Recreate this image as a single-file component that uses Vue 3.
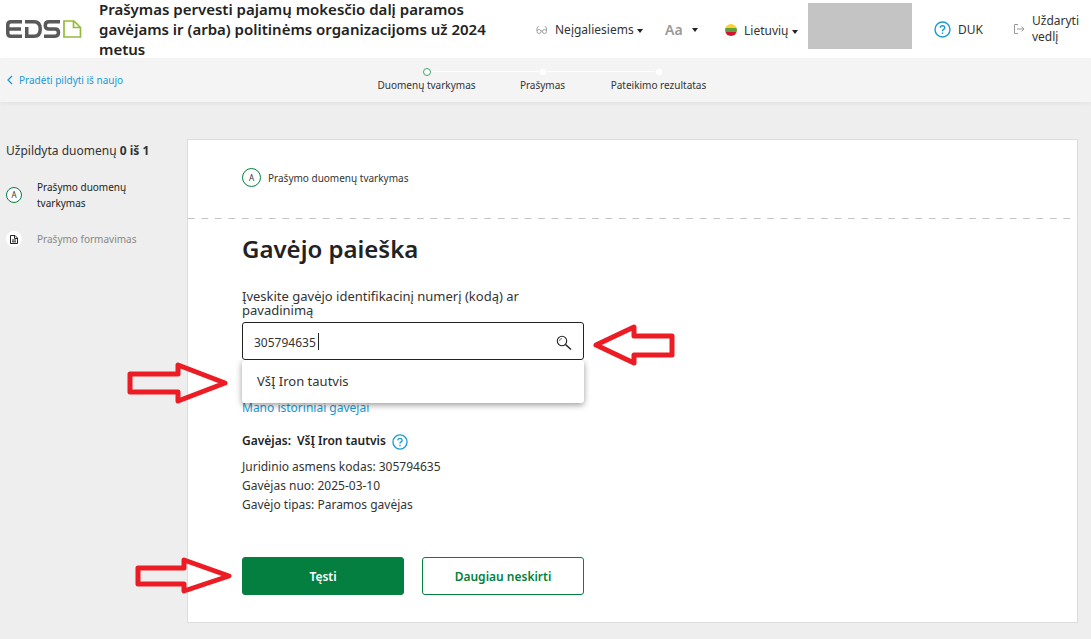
<script setup>
import { ref } from 'vue'

const query = ref('305794635')
const steps = [
  { label: 'Duomenų tvarkymas', active: true },
  { label: 'Prašymas', active: false },
  { label: 'Pateikimo rezultatas', active: false }
]
const details = [
  'Juridinio asmens kodas: 305794635',
  'Gavėjas nuo: 2025-03-10',
  'Gavėjo tipas: Paramos gavėjas'
]
</script>

<template>
  <div class="page">
    <header class="top">
      <a class="logo" href="#" aria-label="EDS">
        <svg width="76" height="20" viewBox="0 0 76 20" fill="none">
          <g stroke="#58595b" stroke-width="3.500">
            <path d="M16 2.750H5Q1.750 2.750 1.750 6V14Q1.750 17.250 5 17.250H16M2 10H15" />
            <path d="M20.750 8V17.250H28Q34.250 17.250 34.250 10T28 2.750H19" />
            <path d="M54 2.750H43Q39.250 2.750 39.250 6.400T43 10H49Q52.500 10 52.500 13.600T49 17.250H38" />
          </g>
          <path d="M58 2H68L74.500 8.500V18H58ZM67.500 2V8.500H74.500" stroke="#95bb3c" stroke-width="1.700" />
        </svg>
      </a>
      <h1>Prašymas pervesti pajamų mokesčio dalį paramos gavėjams ir (arba) politinėms organizacijoms už 2024 metus</h1>
      <nav class="tools">
        <button class="tool access" type="button">
          <svg class="glasses" width="12" height="12" viewBox="0 0 12 12" fill="none" stroke="#999" stroke-width=".9">
            <circle cx="3" cy="8.500" r="2" /><circle cx="8.500" cy="8.500" r="2" />
            <path d="M1 8V5L2.500 3M10.500 8V5L9 3M5 8H6.500" />
          </svg>
          <span>Neįgaliesiems</span><i class="caret"></i>
        </button>
        <button class="tool size" type="button"><b>Aa</b><i class="caret"></i></button>
        <button class="tool lang" type="button">
          <i class="flag"></i><span>Lietuvių</span><i class="caret"></i>
        </button>
        <div class="user"></div>
        <a class="tool duk" href="#">
          <svg class="help" width="17" height="17" viewBox="0 0 17 17" fill="none" stroke="#199ad6" stroke-width="1.400">
            <circle cx="8.500" cy="8.500" r="7.500" />
            <path d="M6.200 6.800Q6.400 4.700 8.500 4.700T10.800 6.700Q10.800 7.700 9.600 8.400T8.500 10.200M8.500 11.500V13" />
          </svg>
          <span>DUK</span>
        </a>
        <a class="tool close" href="#">
          <svg width="11" height="10" viewBox="0 0 11 10" fill="none" stroke="#999">
            <path d="M4 .5H.5V9.500H4M3 5H10M7.500 2.500L10 5L7.500 7.500" />
          </svg>
          <span>Uždaryti vedlį</span>
        </a>
      </nav>
    </header>

    <div class="progress">
      <a class="restart" href="#">
        <svg width="6" height="10" viewBox="0 0 6 10" fill="none" stroke="#199ad6" stroke-width="1.300"><path d="M5 1L1 5L5 9" /></svg>
        Pradėti pildyti iš naujo
      </a>
      <ol class="steps">
        <li v-for="s in steps" :key="s.label" :class="{ active: s.active }"><i class="dot"></i>{{ s.label }}</li>
      </ol>
    </div>

    <div class="body">
      <aside>
        <p class="filled">Užpildyta duomenų <b>0 iš 1</b></p>
        <a class="side current" href="#"><i class="badge">A</i><span>Prašymo duomenų tvarkymas</span></a>
        <a class="side" href="#">
          <i class="badge plain">
            <svg width="8" height="9" viewBox="0 0 8 9" fill="none" stroke="#222">
              <path d="M.5 .5H5L7.500 3V8.500H.5ZM4.500 .5V3.500H7.500M2 5H6M2 6.800H6" />
            </svg>
          </i>
          <span>Prašymo formavimas</span>
        </a>
      </aside>

      <main class="card">
        <div class="cardhead"><i class="badge">A</i><span>Prašymo duomenų tvarkymas</span></div>
        <section class="content">
          <h2>Gavėjo paieška</h2>
          <div class="field">
            <label for="search">Įveskite gavėjo identifikacinį numerį (kodą) ar pavadinimą</label>
            <div class="box">
              <div class="entry"><input id="search" v-model="query" type="text" autocomplete="off" /><i class="cursor"></i></div>
              <button type="button" aria-label="Ieškoti">
                <svg width="16" height="16" viewBox="0 0 16 16" fill="none" stroke="#222">
                  <circle cx="6" cy="6" r="4.700" stroke-width="1.100" />
                  <path d="M3.500 6Q3.500 3.500 6 3.500" stroke-width=".6" />
                  <path d="M9.500 9.500L15 14.500" stroke-width="1.500" />
                </svg>
              </button>
              <ul class="menu"><li>VšĮ Iron tautvis</li></ul>
              <svg class="arrow at-search" width="82" height="42" viewBox="0 0 82 42"><path d="M3 21L41 3V12H79V31H41V39Z" /></svg>
              <svg class="arrow at-option" width="102" height="42" viewBox="0 0 102 42"><path d="M3 12H51V3L98 21L51 39V30H3Z" /></svg>
            </div>
          </div>
          <a class="history" href="#">Mano istoriniai gavėjai</a>
          <p class="receiver">
            <b>Gavėjas:</b><b>VšĮ Iron tautvis</b>
            <svg class="help" width="16" height="16" viewBox="0 0 17 17" fill="none" stroke="#199ad6" stroke-width="1.400">
              <circle cx="8.500" cy="8.500" r="7.500" />
              <path d="M6.200 6.800Q6.400 4.700 8.500 4.700T10.800 6.700Q10.800 7.700 9.600 8.400T8.500 10.200M8.500 11.500V13" />
            </svg>
          </p>
          <p v-for="d in details" :key="d" class="detail">{{ d }}</p>
          <div class="actions">
            <button class="primary" type="button">Tęsti</button>
            <button class="secondary" type="button">Daugiau neskirti</button>
            <svg class="arrow at-submit" width="98" height="38" viewBox="0 0 98 38"><path d="M3 11H49V3L94 19L49 34V27H3Z" /></svg>
          </div>
        </section>
      </main>
    </div>
  </div>
</template>

<style>
body { margin: 0; background: #eee; }
</style>

<style scoped>
* { box-sizing: border-box; }
.page { font-family: "Noto Sans", "Open Sans", sans-serif; font-size: 12px; color: #333; min-height: 100vh; background: #eee; }
a { text-decoration: none; color: #199ad6; }
button { font: inherit; color: inherit; border: 0; padding: 0; background: none; cursor: pointer; }
p, h1, h2, ul, ol { margin: 0; padding: 0; list-style: none; }
svg { flex: none; display: block; }
i { font-style: normal; flex: none; }

.top { display: flex; align-items: center; height: 58px; padding: 0 12px 0 6px; background: #fff; }
.logo { flex: none; width: 93px; }
h1 { flex: 1; font-size: 15px; line-height: 20px; font-weight: 600; color: #222; }
.tools { flex: none; display: flex; align-items: center; margin-left: 38px; }
.tool { display: flex; align-items: center; color: #333; white-space: nowrap; }
.access { width: 129px; gap: 7px; }
.size { width: 60px; gap: 9px; padding-top: 2px; }
.size b { font-size: 14px; line-height: 20px; font-weight: 600; color: #999; }
.lang { width: 83px; gap: 7px; padding-top: 2px; }
.duk { width: 80px; gap: 7px; }
.close { width: 65px; gap: 7px; line-height: 16px; white-space: normal; }
.caret { border: 3px solid transparent; border-top: 4px solid #222; border-bottom: 0; }
.access .caret, .lang .caret { margin: 3px 0 0 -4px; }
.flag { width: 12px; height: 12px; border-radius: 50%; background: linear-gradient(#fcd02e 0 4px, #5f9f3e 4px 8px, #d2142c 8px); }
.user { width: 104px; height: 46px; margin-right: 22px; margin-bottom: 6px; background: #c4c4c4; }

.progress { display: grid; grid-template-columns: 1fr auto 1fr; height: 44px; padding: 0 13px 0 7px; background: #f4f4f4; box-shadow: 0 2px 4px #e4e4e4; font-size: 10px; }
.restart { display: flex; align-items: center; gap: 6px; }
.steps { display: grid; grid-template-columns: repeat(3, 116px); padding-top: 9px; }
.steps li { position: relative; text-align: center; line-height: 16px; white-space: nowrap; }
.dot { display: block; position: relative; width: 6px; height: 6px; margin: 2px auto; border-radius: 2px; background: #fff; }
.steps li:not(:last-child)::after { content: ""; position: absolute; left: calc(50% + 4px); right: calc(4px - 50%); top: 4px; height: 1px; background: #fff; }
.active .dot { width: 8px; height: 8px; margin: 1px auto; border: 1px solid #3fa373; border-radius: 50%; }

.body { display: flex; align-items: flex-start; padding: 37px 13px 16px 0; }
aside { flex: none; width: 187px; padding-left: 6px; }
.filled { line-height: 24px; }
.side { display: flex; align-items: center; gap: 15px; margin-top: 20px; font-size: 10px; line-height: 16px; color: #888; }
.current { margin-top: 16px; color: #222; }
.current span { width: 100px; }
.badge { display: flex; align-items: center; justify-content: center; width: 16px; height: 16px; border: 1px solid #047f40; border-radius: 50%; background: #fff; color: #333; font-size: 8px; }
.plain { border: 0; }

.card { flex: 1; min-height: 484px; border: 1px solid #ddd; background: #fff; }
.cardhead { display: flex; align-items: center; gap: 7px; height: 79px; padding: 0 54px 4px; font-size: 10px; background: linear-gradient(90deg, #c4c4c4 0 7px, transparent 7px) 0 100% / calc(100% / 66) 1px repeat-x; }
.cardhead .badge { width: 19px; height: 19px; }
.content { padding: 12px 54px 25px; }
h2 { font-size: 24px; line-height: 36px; font-weight: 600; color: #222; }
.field { width: 342px; margin-top: 22px; }
label { display: block; font-size: 13px; line-height: 14px; }
.box { position: relative; display: flex; align-items: center; height: 38px; margin-top: 5px; padding: 3px 11px 0; border: 1px solid #222; border-radius: 3px; }
.entry { position: relative; flex: 1; display: flex; }
input { width: 100%; border: 0; outline: 0; padding: 0; background: none; color: #333; font: inherit; line-height: 20px; }
.cursor { position: absolute; left: 64px; top: 0; width: 1px; height: 17px; background: #222; }
.menu { position: absolute; left: -1px; right: -1px; top: 37px; padding: 10px 15px; background: #fff; border-radius: 3px; box-shadow: 0 2px 6px rgba(0, 0, 0, .4); font-size: 13px; line-height: 23px; clip-path: inset(0 -10px -10px); }
.history { display: block; margin-top: 39px; line-height: 18px; }
.receiver { display: flex; align-items: center; gap: 6px; margin-top: 15px; line-height: 18px; }
.receiver b { font-weight: 600; color: #222; }
.receiver .help { margin-top: 2px; }
.detail { line-height: 19px; }
.receiver + .detail { margin-top: 7px; }
.actions { position: relative; display: flex; gap: 18px; margin-top: 43px; }
.actions button { width: 162px; height: 38px; border: 1px solid #047f40; border-radius: 3px; font-weight: 600; }
.actions .primary { background: #047f40; color: #fff; }
.actions .secondary { background: #fff; color: #047f40; }
.arrow { position: absolute; fill: none; stroke: #ed1c24; stroke-width: 5; stroke-linejoin: round; }
.at-search { left: 350px; top: 1px; }
.at-option { right: 354px; top: 39px; }
.at-submit { left: -107px; top: 0; }
</style>
